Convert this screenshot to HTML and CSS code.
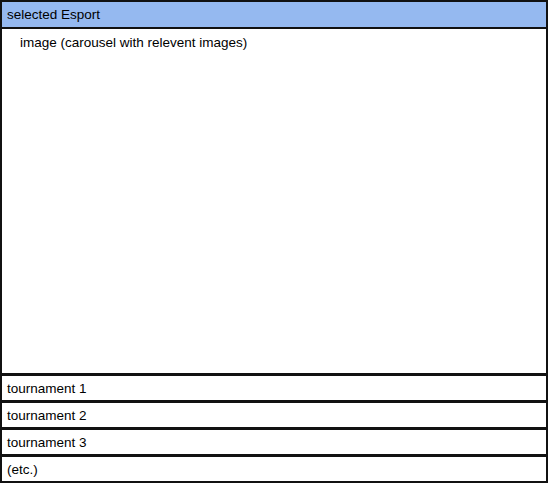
FILE: index.html
```html
<!DOCTYPE html>
<html>
<head>
<meta charset="utf-8">
<link rel="stylesheet" href="styles.css">
</head>
<body>
<div class="frame">
  <div class="header">selected Esport</div>
  <div class="carousel">image (carousel with relevent images)</div>
  <div class="list">
    <div class="row">tournament 1</div>
    <div class="row">tournament 2</div>
    <div class="row">tournament 3</div>
    <div class="row">(etc.)</div>
  </div>
</div>
</body>
</html>
```

FILE: styles.css
```css
html, body {
  margin: 0;
  padding: 0;
  background: #ffffff;
}
body {
  font-family: "Liberation Sans", Arial, sans-serif;
  font-size: 13.5px;
  color: #000;
}
.frame {
  width: 548px;
  display: flex;
  flex-direction: column;
}
.header {
  height: 25px;
  border: 2px solid #111;
  background: #95b9f0;
  padding-left: 5px;
  display: flex;
  align-items: center;
}
.carousel {
  height: 338px;
  border-left: 2px solid #111;
  border-right: 2px solid #111;
  padding: 6px 0 0 18px;
}
.list {
  display: flex;
  flex-direction: column;
  border-bottom: 2px solid #111;
  box-shadow: 0 1px 0 #c8c8c8;
}
.row {
  height: 24px;
  border-top: 3px solid #111;
  border-left: 2px solid #111;
  border-right: 2px solid #111;
  padding-left: 5px;
  display: flex;
  align-items: center;
}
```
